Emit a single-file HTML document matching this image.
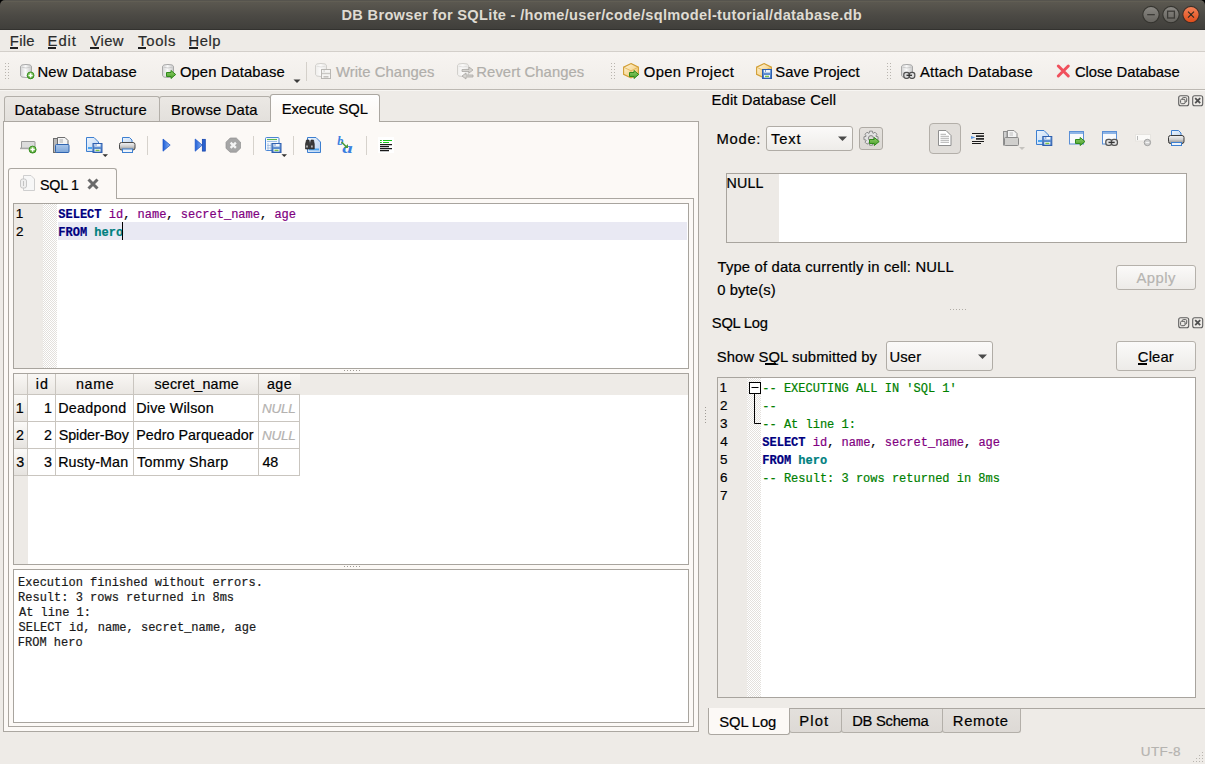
<!DOCTYPE html>
<html><head><meta charset="utf-8"><style>
html,body{margin:0;padding:0;}
body{width:1205px;height:764px;overflow:hidden;position:relative;background:#eeebe7;font-family:"Liberation Sans",sans-serif;}
body>div,body>svg{position:absolute;}
body>div{-webkit-text-stroke:0.2px currentColor;}
</style></head><body>
<div style="left:0px;top:0px;width:8px;height:8px;background:#000;"></div>
<div style="left:1197px;top:0px;width:8px;height:8px;background:#000;"></div>
<div style="left:0px;top:0px;width:1205px;height:30px;background:linear-gradient(#56544e 0px,#56544e 1px,#615e54 1px,#615e54 2px,#5b5850 2px,#4b4944 16px,#403f3b 29px,#33322f 29px);border-radius:5px 5px 0 0;"></div>
<div style="top:5px;font:bold 14.6px/20px 'Liberation Sans', sans-serif;color:#dfdbd2;white-space:pre;letter-spacing:0.318px;left:341.45px;-webkit-text-stroke:0;">DB Browser for SQLite - /home/user/code/sqlmodel-tutorial/database.db</div>
<svg style="left:1140px;top:4px" width="62" height="22" viewBox="0 0 62 22">
<defs><linearGradient id="gg" x1="0" y1="0" x2="0" y2="1"><stop offset="0" stop-color="#8a8883"/><stop offset="1" stop-color="#64625d"/></linearGradient>
<linearGradient id="og" x1="0" y1="0" x2="0" y2="1"><stop offset="0" stop-color="#f5845a"/><stop offset="1" stop-color="#df4b18"/></linearGradient></defs>
<circle cx="11" cy="10.6" r="8.2" fill="url(#gg)" stroke="#35342f" stroke-width="1.1"/>
<rect x="7.2" y="10" width="7.6" height="1.3" fill="#3c3b37"/>
<circle cx="31" cy="10.6" r="8.2" fill="url(#gg)" stroke="#35342f" stroke-width="1.1"/>
<rect x="27.6" y="7.2" width="6.8" height="6.8" fill="none" stroke="#3c3b37" stroke-width="1.3"/>
<circle cx="51" cy="10.6" r="8.2" fill="url(#og)" stroke="#3a302a" stroke-width="1.1"/>
<path d="M48 7.6 L54 13.6 M54 7.6 L48 13.6" stroke="#2d2a20" stroke-width="1.1"/><circle cx="51" cy="10.6" r="1" fill="#2d2a20"/>
</svg>
<div style="left:0px;top:30px;width:1205px;height:21px;background:#eeebe7;"></div>
<div style="left:0px;top:51px;width:1205px;height:1px;background:#d3cfca;"></div>
<div style="top:31px;font:normal 14.8px/20px 'Liberation Sans', sans-serif;color:#2b2b2b;white-space:pre;letter-spacing:0.307px;left:9.82px;">File</div>
<div style="top:31px;font:normal 14.8px/20px 'Liberation Sans', sans-serif;color:#2b2b2b;white-space:pre;letter-spacing:0.901px;left:47.62px;">Edit</div>
<div style="top:31px;font:normal 14.8px/20px 'Liberation Sans', sans-serif;color:#2b2b2b;white-space:pre;letter-spacing:0.385px;left:90.53px;">View</div>
<div style="top:31px;font:normal 14.8px/20px 'Liberation Sans', sans-serif;color:#2b2b2b;white-space:pre;letter-spacing:0.714px;left:138.10px;">Tools</div>
<div style="top:31px;font:normal 14.8px/20px 'Liberation Sans', sans-serif;color:#2b2b2b;white-space:pre;letter-spacing:0.587px;left:188.42px;">Help</div>
<div style="left:10px;top:47px;width:8px;height:2px;background:#202020;"></div>
<div style="left:48px;top:47px;width:8px;height:2px;background:#202020;"></div>
<div style="left:90px;top:47px;width:9px;height:2px;background:#202020;"></div>
<div style="left:138px;top:47px;width:8px;height:2px;background:#202020;"></div>
<div style="left:189px;top:47px;width:9px;height:2px;background:#202020;"></div>
<div style="left:0px;top:52px;width:1205px;height:37px;background:linear-gradient(#f7f4f1,#f0ede9);"></div>
<div style="left:0px;top:89px;width:1205px;height:1px;background:#bcb8b2;"></div>
<div style="left:0px;top:90px;width:1205px;height:1px;background:#f7f5f2;"></div>
<svg style="left:0;top:0" width="0" height="0"><defs>
<linearGradient id="cyl" x1="0" x2="1"><stop offset="0" stop-color="#d4d4d4"/><stop offset=".45" stop-color="#fafafa"/><stop offset="1" stop-color="#c8c8c8"/></linearGradient>
<linearGradient id="cyld" x1="0" x2="1"><stop offset="0" stop-color="#eeedeb"/><stop offset=".45" stop-color="#fbfaf9"/><stop offset="1" stop-color="#e9e8e6"/></linearGradient>
<linearGradient id="grn" x1="0" y1="0" x2="0" y2="1"><stop offset="0" stop-color="#8fcf6a"/><stop offset="1" stop-color="#4a9e2a"/></linearGradient>
<linearGradient id="box" x1="0" y1="0" x2="1" y2="1"><stop offset="0" stop-color="#fff6dc"/><stop offset="1" stop-color="#f0c060"/></linearGradient>
<linearGradient id="flp" x1="0" y1="0" x2="0" y2="1"><stop offset="0" stop-color="#7aa8e0"/><stop offset="1" stop-color="#3f72c0"/></linearGradient>
<linearGradient id="fold" x1="0" y1="0" x2="0" y2="1"><stop offset="0" stop-color="#a9c6ea"/><stop offset="1" stop-color="#7ea6d8"/></linearGradient>
<linearGradient id="doc" x1="0" y1="0" x2="1" y2="1"><stop offset="0" stop-color="#eef5fd"/><stop offset="1" stop-color="#bcd5f2"/></linearGradient>
<linearGradient id="bl" x1="0" x2="1"><stop offset="0" stop-color="#1e5fd8"/><stop offset="1" stop-color="#8db4f0"/></linearGradient>
<linearGradient id="prn" x1="0" y1="0" x2="0" y2="1"><stop offset="0" stop-color="#f4f4f4"/><stop offset=".5" stop-color="#cfcfcf"/><stop offset="1" stop-color="#8a8a8a"/></linearGradient>
</defs></svg>
<svg style="left:5px;top:63px" width="4" height="18" viewBox="0 0 4 18"><rect x="0" y="0" width="1" height="1" fill="#b9b5af"/><rect x="3" y="0" width="1" height="1" fill="#b9b5af"/><rect x="0" y="3" width="1" height="1" fill="#b9b5af"/><rect x="3" y="3" width="1" height="1" fill="#b9b5af"/><rect x="0" y="6" width="1" height="1" fill="#b9b5af"/><rect x="3" y="6" width="1" height="1" fill="#b9b5af"/><rect x="0" y="9" width="1" height="1" fill="#b9b5af"/><rect x="3" y="9" width="1" height="1" fill="#b9b5af"/><rect x="0" y="12" width="1" height="1" fill="#b9b5af"/><rect x="3" y="12" width="1" height="1" fill="#b9b5af"/><rect x="0" y="15" width="1" height="1" fill="#b9b5af"/><rect x="3" y="15" width="1" height="1" fill="#b9b5af"/></svg>
<svg style="left:18px;top:62px" width="18" height="18" viewBox="18 62 18 18"><path d="M20.5 66.3 Q20.5 64.5 26.0 64.5 Q31.5 64.5 31.5 66.3 V75.7 Q31.5 77.5 26.0 77.5 Q20.5 77.5 20.5 75.7 Z" fill="url(#cyl)" stroke="#a8a8a8" stroke-width="1"/><path d="M21.5 67.2 Q26.0 68.8 30.5 67.2" fill="none" stroke="#c4c4c4" stroke-width=".8"/><circle cx="30.6" cy="75.4" r="3.4" fill="url(#grn)" stroke="#2f8a1a" stroke-width=".9"/><path d="M30.6 73.3 V77.5 M28.5 75.4 H32.7" stroke="#fff" stroke-width="1.5"/></svg>
<div style="top:62px;font:normal 14.8px/20px 'Liberation Sans', sans-serif;color:#000;white-space:pre;letter-spacing:0.197px;left:37.42px;">New Database</div>
<svg style="left:160px;top:62px" width="18" height="18" viewBox="160 62 18 18"><path d="M162.5 66.3 Q162.5 64.5 168.0 64.5 Q173.5 64.5 173.5 66.3 V75.7 Q173.5 77.5 168.0 77.5 Q162.5 77.5 162.5 75.7 Z" fill="url(#cyl)" stroke="#a8a8a8" stroke-width="1"/><path d="M163.5 67.2 Q168.0 68.8 172.5 67.2" fill="none" stroke="#c4c4c4" stroke-width=".8"/><path d="M166.5 72.52 H171.0 V70.5 L175.7 74.5 L171.0 78.5 V76.48 H166.5 Z" fill="url(#grn)" stroke="#2f8a1a" stroke-width="1"/></svg>
<div style="top:62px;font:normal 14.8px/20px 'Liberation Sans', sans-serif;color:#000;white-space:pre;letter-spacing:0.088px;left:179.93px;">Open Database</div>
<svg style="left:293px;top:79px" width="8" height="5" viewBox="0 0 8 5"><path d="M0.5 0.5 H7.5 L4 4 Z" fill="#3a3a3a"/></svg>
<div style="left:306px;top:62px;width:1px;height:19px;background:#d4d0ca;"></div>
<svg style="left:313px;top:62px" width="20" height="18" viewBox="313 62 20 18"><path d="M315.5 65.3 Q315.5 63.5 321.0 63.5 Q326.5 63.5 326.5 65.3 V74.7 Q326.5 76.5 321.0 76.5 Q315.5 76.5 315.5 74.7 Z" fill="url(#cyld)" stroke="#d2d0cc" stroke-width="1"/><path d="M316.5 66.2 Q321.0 67.8 325.5 66.2" fill="none" stroke="#dddcda" stroke-width=".8"/><rect x="321.5" y="69.5" width="9" height="9" fill="#f6f5f3" stroke="#b9b7b3" stroke-width="1"/><rect x="322" y="72.8" width="8" height="1.4" fill="#c9c7c3"/><rect x="323.5" y="76" width="5" height="1.6" fill="#c4c2be"/><rect x="323.6" y="70.5" width="1" height="1" fill="#aaa"/></svg>
<div style="top:62px;font:normal 14.8px/20px 'Liberation Sans', sans-serif;color:#b0aeaa;white-space:pre;letter-spacing:0.082px;left:335.93px;">Write Changes</div>
<svg style="left:455px;top:62px" width="20" height="18" viewBox="455 62 20 18"><path d="M457.5 65.3 Q457.5 63.5 463.0 63.5 Q468.5 63.5 468.5 65.3 V74.7 Q468.5 76.5 463.0 76.5 Q457.5 76.5 457.5 74.7 Z" fill="url(#cyld)" stroke="#d2d0cc" stroke-width="1"/><path d="M458.5 66.2 Q463.0 67.8 467.5 66.2" fill="none" stroke="#dddcda" stroke-width=".8"/><path d="M462 69.5 H469 V67 L473 70 L469 73 V71.5 H462 Z M473 75 H466 V73 L462 76 L466 79 V77 H473 Z" fill="#d6d4d0" stroke="#a9a7a3" stroke-width=".8"/></svg>
<div style="top:62px;font:normal 14.8px/20px 'Liberation Sans', sans-serif;color:#b0aeaa;white-space:pre;letter-spacing:0.075px;left:476.32px;">Revert Changes</div>
<svg style="left:611px;top:63px" width="4" height="18" viewBox="0 0 4 18"><rect x="0" y="0" width="1" height="1" fill="#b9b5af"/><rect x="3" y="0" width="1" height="1" fill="#b9b5af"/><rect x="0" y="3" width="1" height="1" fill="#b9b5af"/><rect x="3" y="3" width="1" height="1" fill="#b9b5af"/><rect x="0" y="6" width="1" height="1" fill="#b9b5af"/><rect x="3" y="6" width="1" height="1" fill="#b9b5af"/><rect x="0" y="9" width="1" height="1" fill="#b9b5af"/><rect x="3" y="9" width="1" height="1" fill="#b9b5af"/><rect x="0" y="12" width="1" height="1" fill="#b9b5af"/><rect x="3" y="12" width="1" height="1" fill="#b9b5af"/><rect x="0" y="15" width="1" height="1" fill="#b9b5af"/><rect x="3" y="15" width="1" height="1" fill="#b9b5af"/></svg>
<svg style="left:621px;top:62px" width="20" height="18" viewBox="621 62 20 18"><path d="M631.0 63.6 L638.4 67.185 V74.315 L631.0 77.9 L623.6 74.315 V67.185 Z" fill="url(#box)" stroke="#d19d32" stroke-width="1.1"/><path d="M623.6 67.185 L631.0 70.87 L638.4 67.185 M631.0 70.87 V77.9" fill="none" stroke="#deb050" stroke-width=".8"/><path d="M629.5 72.52 H634.0 V70.5 L638.7 74.5 L634.0 78.5 V76.48 H629.5 Z" fill="url(#grn)" stroke="#2f8a1a" stroke-width="1"/></svg>
<div style="top:62px;font:normal 14.8px/20px 'Liberation Sans', sans-serif;color:#000;white-space:pre;letter-spacing:0.326px;left:643.83px;">Open Project</div>
<svg style="left:754px;top:62px" width="20" height="18" viewBox="754 62 20 18"><path d="M764.0 63.6 L771.4 67.185 V74.315 L764.0 77.9 L756.6 74.315 V67.185 Z" fill="url(#box)" stroke="#d19d32" stroke-width="1.1"/><path d="M756.6 67.185 L764.0 70.87 L771.4 67.185 M764.0 70.87 V77.9" fill="none" stroke="#deb050" stroke-width=".8"/><rect x="762.5" y="69.5" width="9" height="9" fill="url(#flp)" stroke="#2e5fae" stroke-width="1"/><rect x="764" y="70" width="6" height="2.6" fill="#f2f6fb"/><rect x="764" y="75" width="6" height="2.6" fill="#f2f6fb"/><rect x="765" y="75.7" width="4" height="1.4" fill="#7cc34a"/><rect x="765" y="70.4" width="1" height="1.2" fill="#2e5fae"/></svg>
<div style="top:62px;font:normal 14.8px/20px 'Liberation Sans', sans-serif;color:#000;white-space:pre;letter-spacing:0.036px;left:775.33px;">Save Project</div>
<svg style="left:887px;top:63px" width="4" height="18" viewBox="0 0 4 18"><rect x="0" y="0" width="1" height="1" fill="#b9b5af"/><rect x="3" y="0" width="1" height="1" fill="#b9b5af"/><rect x="0" y="3" width="1" height="1" fill="#b9b5af"/><rect x="3" y="3" width="1" height="1" fill="#b9b5af"/><rect x="0" y="6" width="1" height="1" fill="#b9b5af"/><rect x="3" y="6" width="1" height="1" fill="#b9b5af"/><rect x="0" y="9" width="1" height="1" fill="#b9b5af"/><rect x="3" y="9" width="1" height="1" fill="#b9b5af"/><rect x="0" y="12" width="1" height="1" fill="#b9b5af"/><rect x="3" y="12" width="1" height="1" fill="#b9b5af"/><rect x="0" y="15" width="1" height="1" fill="#b9b5af"/><rect x="3" y="15" width="1" height="1" fill="#b9b5af"/></svg>
<svg style="left:899px;top:62px" width="18" height="18" viewBox="899 62 18 18"><path d="M901.5 66.3 Q901.5 64.5 907.0 64.5 Q912.5 64.5 912.5 66.3 V75.7 Q912.5 77.5 907.0 77.5 Q901.5 77.5 901.5 75.7 Z" fill="url(#cyl)" stroke="#a8a8a8" stroke-width="1"/><path d="M902.5 67.2 Q907.0 68.8 911.5 67.2" fill="none" stroke="#c4c4c4" stroke-width=".8"/><rect x="903.8" y="72.3" width="5.5" height="6" rx="2.2" fill="#ddd" stroke="#505050" stroke-width="1.2"/><rect x="909.3" y="72.3" width="5.5" height="6" rx="2.2" fill="#ddd" stroke="#505050" stroke-width="1.2"/><path d="M906.5 75.3 H912" stroke="#303030" stroke-width="1.3"/></svg>
<div style="top:62px;font:normal 14.8px/20px 'Liberation Sans', sans-serif;color:#000;white-space:pre;letter-spacing:0.230px;left:920.00px;">Attach Database</div>
<svg style="left:1055px;top:62px" width="17" height="18" viewBox="1055 62 17 18"><path d="M1058.3 66 L1068.3 76 M1068.3 66 L1058.3 76" stroke="#f0505c" stroke-width="3" stroke-linecap="round"/></svg>
<div style="top:62px;font:normal 14.8px/20px 'Liberation Sans', sans-serif;color:#000;white-space:pre;letter-spacing:-0.046px;left:1074.96px;">Close Database</div>
<div style="left:4px;top:96px;width:156px;height:25px;background:linear-gradient(#ebe8e4,#e3e0dc);border:1px solid #b3afa9;border-bottom:none;border-radius:3px 3px 0 0;box-sizing:border-box;"></div>
<div style="top:100px;font:normal 14.8px/20px 'Liberation Sans', sans-serif;color:#000;white-space:pre;letter-spacing:0.279px;left:14.42px;">Database Structure</div>
<div style="left:159px;top:96px;width:112px;height:25px;background:linear-gradient(#ebe8e4,#e3e0dc);border:1px solid #b3afa9;border-bottom:none;border-radius:3px 3px 0 0;box-sizing:border-box;"></div>
<div style="top:100px;font:normal 14.8px/20px 'Liberation Sans', sans-serif;color:#000;white-space:pre;letter-spacing:0.175px;left:171.02px;">Browse Data</div>
<div style="left:3px;top:121px;width:696px;height:611px;background:#fcf9f6;border:1px solid #aba7a1;box-sizing:border-box;"></div>
<div style="left:270px;top:94px;width:110px;height:28px;background:linear-gradient(#fefefe,#fcf9f6 60%);border:1px solid #aba7a1;border-bottom:none;border-radius:3px 3px 0 0;box-sizing:border-box;"></div>
<div style="top:99px;font:normal 14.8px/20px 'Liberation Sans', sans-serif;color:#000;white-space:pre;letter-spacing:-0.114px;left:281.82px;">Execute SQL</div>
<svg style="left:18px;top:136px" width="20" height="20" viewBox="18 136 20 20"><path d="M21.5 141.5 H34.5 Q35 141.5 35 142 V148.5 H21.5 Z" fill="#dcdcdc" stroke="#9a9a9a" stroke-width="1"/><rect x="20" y="147.6" width="15" height="1.6" fill="#a8a8a8"/><circle cx="32.6" cy="149.6" r="3.5" fill="url(#grn)" stroke="#2f8a1a" stroke-width=".9"/><path d="M32.6 147.4 V151.8 M30.4 149.6 H34.8" stroke="#fff" stroke-width="1.5"/></svg>
<svg style="left:51px;top:135px" width="20" height="20" viewBox="51 135 20 20"><rect x="53.5" y="138.5" width="4" height="14" fill="#b9b9b9" stroke="#6e6e6e" stroke-width="1"/><path d="M57.5 137.5 H65 L68 140.5 V146 H57.5 Z" fill="#f4f4f4" stroke="#6e6e6e" stroke-width="1"/><path d="M59.5 140 H63 M59.5 142 H63" stroke="#9a9a9a" stroke-width=".8"/><rect x="55.5" y="144.5" width="13.5" height="8" rx="1" fill="url(#fold)" stroke="#2f64b0" stroke-width="1"/></svg>
<svg style="left:84px;top:135px" width="26" height="23" viewBox="84 135 26 23"><path d="M86.5 137.5 H94 L98.5 142 V151.5 H86.5 Z" fill="url(#doc)" stroke="#3d7fd0" stroke-width="1"/><rect x="88" y="147" width="4" height="2" fill="#4aa4f0"/><rect x="93.0" y="143.5" width="9.0" height="9" fill="url(#flp)" stroke="#2e5fae" stroke-width="1"/><rect x="94.5" y="144" width="6.0" height="2.6" fill="#f2f6fb"/><rect x="94.5" y="149" width="6.0" height="2.6" fill="#f2f6fb"/><rect x="95.5" y="149.7" width="4.0" height="1.4" fill="#7cc34a"/><rect x="95.5" y="144.4" width="1" height="1.2" fill="#2e5fae"/><path d="M102.5 154.3 H108 L105.25 157 Z" fill="#333"/></svg>
<svg style="left:117px;top:135px" width="20" height="20" viewBox="117 135 20 20"><path d="M122.5 137.5 H129.5 L132 140 V145 H122.5 Z" fill="url(#doc)" stroke="#3d7fd0" stroke-width="1"/><rect x="119.5" y="142.5" width="15.5" height="7.5" rx="2" fill="url(#prn)" stroke="#4a4a4a" stroke-width="1"/><rect x="122.5" y="149" width="10" height="3.5" fill="#eef4fb" stroke="#3d7fd0" stroke-width="1"/></svg>
<div style="left:147px;top:136px;width:1px;height:19px;background:#d6d2cc;"></div>
<svg style="left:160px;top:136px" width="14" height="18" viewBox="160 136 14 18"><path d="M163 139 L170.2 145.1 L163 151.2 Z" fill="url(#bl)" stroke="#1a55c8" stroke-width=".7"/></svg>
<svg style="left:193px;top:136px" width="15" height="18" viewBox="193 136 15 18"><path d="M195.2 139 L202.2 145.1 L195.2 151.2 Z" fill="url(#bl)" stroke="#1a55c8" stroke-width=".7"/><rect x="202.3" y="139.3" width="3" height="11.8" fill="#2a62d0" stroke="#0f3fa8" stroke-width=".7"/></svg>
<svg style="left:224px;top:136px" width="18" height="18" viewBox="224 136 18 18"><path d="M230.2 138 H236.3 L240.5 142.2 V148.3 L236.3 152.2 H230.2 L226 148.3 V142.2 Z" fill="#a6a6a6" stroke="#909090" stroke-width=".7"/><path d="M230.6 142.6 L235.9 147.9 M235.9 142.6 L230.6 147.9" stroke="#f4f4f4" stroke-width="2.3"/></svg>
<div style="left:253px;top:136px;width:1px;height:19px;background:#d6d2cc;"></div>
<svg style="left:263px;top:135px" width="27" height="23" viewBox="263 135 27 23"><rect x="265.5" y="137.5" width="13.5" height="13" rx="1" fill="#f4f8fd" stroke="#4a86d4" stroke-width="1"/><path d="M267 139.5 H277" stroke="#5cb84a" stroke-width="1.1"/><path d="M267 141.5 H277" stroke="#8ab0e0" stroke-width=".8"/><path d="M268 143 V150 M271 143 V150 M267 145.5 H271 M267 148 H271" stroke="#9bb8df" stroke-width=".8"/><rect x="272.0" y="143.5" width="9.0" height="9" fill="url(#flp)" stroke="#2e5fae" stroke-width="1"/><rect x="273.5" y="144" width="6.0" height="2.6" fill="#f2f6fb"/><rect x="273.5" y="149" width="6.0" height="2.6" fill="#f2f6fb"/><rect x="274.5" y="149.7" width="4.0" height="1.4" fill="#7cc34a"/><rect x="274.5" y="144.4" width="1" height="1.2" fill="#2e5fae"/><path d="M281.5 154.3 H287 L284.25 157 Z" fill="#333"/></svg>
<div style="left:293px;top:136px;width:1px;height:19px;background:#d6d2cc;"></div>
<svg style="left:303px;top:135px" width="20" height="20" viewBox="303 135 20 20"><path d="M307.5 137.5 H316 L320.5 142 V152.5 H307.5 Z" fill="url(#doc)" stroke="#3d7fd0" stroke-width="1"/><rect x="309" y="148.5" width="10" height="1.8" fill="#4aa4f0"/><path d="M305.5 144 L306.5 140 H309 L309.8 144 V149 H305.5 Z M310.2 144 L311 140 H313.5 L314.3 144 V149 H310.2 Z" fill="#3a3a3a" stroke="#1e1e1e" stroke-width=".6"/><rect x="306.3" y="145.5" width="1.4" height="2" fill="#d0d0d0"/><rect x="311.2" y="145.5" width="1.4" height="2" fill="#d0d0d0"/></svg>
<svg style="left:336px;top:135px" width="20" height="20" viewBox="336 135 20 20"><text x="337.2" y="144.8" font-family="Liberation Serif" font-style="italic" font-weight="bold" font-size="12.5" fill="#3a80e0">b</text><text x="342.2" y="153" font-family="Liberation Serif" font-style="italic" font-weight="bold" font-size="15.5" fill="#3a80e0" transform="translate(342.2 153) scale(1.35 1) translate(-342.2 -153)">a</text><path d="M341.5 142 L346.5 147" stroke="#4a9a3a" stroke-width="1.6"/><path d="M344 148 H348 V144 Z" fill="#4a9a3a"/></svg>
<div style="left:366px;top:136px;width:1px;height:19px;background:#d6d2cc;"></div>
<svg style="left:377px;top:136px" width="19" height="18" viewBox="377 136 19 18"><rect x="378" y="137" width="16" height="16" fill="#fff"/><path d="M380 140.5 H381.8 M383 140.5 H392 M380 142.5 H381.8 M383 142.5 H389" stroke="#19c419" stroke-width="1.1"/><path d="M380 144.6 H392 M380 146.6 H389 M380 148.6 H392 M380 150.6 H389" stroke="#1a1a1a" stroke-width="1.1"/></svg>
<div style="left:8px;top:198px;width:686px;height:529px;border:1px solid #aba7a1;box-sizing:border-box;"></div>
<div style="left:8px;top:168px;width:109px;height:31px;background:#fcf9f6;border:1px solid #aba7a1;border-bottom:none;border-radius:3px 3px 0 0;box-sizing:border-box;"></div>
<svg style="left:19px;top:174px" width="18" height="18" viewBox="0 0 18 18"><path d="M4.5 1.5 H12 L15.5 5 V16.5 H4.5 Z" fill="#f7f7f7" stroke="#c9c9c9" stroke-width=".9"/>
<rect x="1.5" y="5" width="6" height="9" rx="2" fill="#efefef" stroke="#c2c2c2" stroke-width=".9"/><path d="M4.5 7 V12" stroke="#c2c2c2"/></svg>
<div style="top:175px;font:normal 14.27px/20px 'Liberation Sans', sans-serif;color:#000;white-space:pre;letter-spacing:-0.250px;left:40.06px;">SQL 1</div>
<svg style="left:86px;top:177px" width="14" height="14" viewBox="0 0 14 14"><path d="M2.5 2.5 L11.5 11.5 M11.5 2.5 L2.5 11.5" stroke="#6b6b6b" stroke-width="3"/></svg>
<div style="left:13px;top:203px;width:676px;height:166px;background:#fff;border:1px solid #a8a49e;box-sizing:border-box;"></div>
<div style="left:14px;top:204px;width:29px;height:164px;background:#edeae6;"></div>
<div style="left:43px;top:204px;width:14px;height:164px;background-image:repeating-conic-gradient(#e3e0dc 0 25%,#ffffff 0 50%);background-size:2px 2px;"></div>
<div style="left:58px;top:222px;width:629px;height:18px;background:#e9e9f3;"></div>
<div style="top:206px;font:normal 12px/18px 'Liberation Mono', monospace;color:#000;white-space:pre;left:58.30px;"><span style="color:#00007f;font-weight:bold">SELECT</span><span style="color:#000;font-weight:normal"> </span><span style="color:#7f007f;font-weight:normal">id</span><span style="color:#000;font-weight:normal">, </span><span style="color:#7f007f;font-weight:normal">name</span><span style="color:#000;font-weight:normal">, </span><span style="color:#7f007f;font-weight:normal">secret_name</span><span style="color:#000;font-weight:normal">, </span><span style="color:#7f007f;font-weight:normal">age</span></div>
<div style="top:224px;font:normal 12px/18px 'Liberation Mono', monospace;color:#000;white-space:pre;left:58.30px;"><span style="color:#00007f;font-weight:bold">FROM</span><span style="color:#000;font-weight:normal"> </span><span style="color:#007f7f;font-weight:bold">hero</span></div>
<div style="left:122px;top:222px;width:1px;height:18px;background:#000;"></div>
<div style="top:204px;font:normal 13.5px/20px 'Liberation Sans', sans-serif;color:#000;white-space:pre;left:15.79px;">1</div>
<div style="top:222px;font:normal 13.5px/20px 'Liberation Sans', sans-serif;color:#000;white-space:pre;left:16.12px;">2</div>
<div style="left:344px;top:370px;width:1px;height:1px;background:#9f9b95;"></div>
<div style="left:344px;top:566px;width:1px;height:1px;background:#9f9b95;"></div>
<div style="left:347px;top:370px;width:1px;height:1px;background:#9f9b95;"></div>
<div style="left:347px;top:566px;width:1px;height:1px;background:#9f9b95;"></div>
<div style="left:350px;top:370px;width:1px;height:1px;background:#9f9b95;"></div>
<div style="left:350px;top:566px;width:1px;height:1px;background:#9f9b95;"></div>
<div style="left:353px;top:370px;width:1px;height:1px;background:#9f9b95;"></div>
<div style="left:353px;top:566px;width:1px;height:1px;background:#9f9b95;"></div>
<div style="left:356px;top:370px;width:1px;height:1px;background:#9f9b95;"></div>
<div style="left:356px;top:566px;width:1px;height:1px;background:#9f9b95;"></div>
<div style="left:359px;top:370px;width:1px;height:1px;background:#9f9b95;"></div>
<div style="left:359px;top:566px;width:1px;height:1px;background:#9f9b95;"></div>
<div style="left:13px;top:373px;width:676px;height:192px;background:#fff;border:1px solid #a8a49e;box-sizing:border-box;"></div>
<div style="left:14px;top:374px;width:674px;height:21px;background:#eeebe7;"></div>
<div style="left:14px;top:394px;width:14px;height:170px;background:#edeae6;"></div>
<div style="left:14px;top:374px;width:14px;height:20px;background:linear-gradient(#f9f7f4,#eae7e3);border-right:1px solid #c9c5bf;box-sizing:border-box;"></div>
<div style="left:28px;top:374px;width:28px;height:20px;background:linear-gradient(#f9f7f4,#eae7e3);border-right:1px solid #c9c5bf;box-sizing:border-box;"></div>
<div style="left:56px;top:374px;width:78px;height:20px;background:linear-gradient(#f9f7f4,#eae7e3);border-right:1px solid #c9c5bf;box-sizing:border-box;"></div>
<div style="left:134px;top:374px;width:125px;height:20px;background:linear-gradient(#f9f7f4,#eae7e3);border-right:1px solid #c9c5bf;box-sizing:border-box;"></div>
<div style="left:259px;top:374px;width:41px;height:20px;background:linear-gradient(#f9f7f4,#eae7e3);"></div>
<div style="left:14px;top:394px;width:286px;height:1px;background:#c9c5bf;"></div>
<div style="left:14px;top:395px;width:13px;height:26px;background:linear-gradient(#fbfaf8,#e6e3df);"></div>
<div style="left:28px;top:395px;width:271px;height:26px;background:#fff;"></div>
<div style="left:14px;top:421px;width:286px;height:1px;background:#c9c5bf;"></div>
<div style="left:14px;top:422px;width:13px;height:26px;background:linear-gradient(#fbfaf8,#e6e3df);"></div>
<div style="left:28px;top:422px;width:271px;height:26px;background:#fff;"></div>
<div style="left:14px;top:448px;width:286px;height:1px;background:#c9c5bf;"></div>
<div style="left:14px;top:449px;width:13px;height:26px;background:linear-gradient(#fbfaf8,#e6e3df);"></div>
<div style="left:28px;top:449px;width:271px;height:26px;background:#fff;"></div>
<div style="left:14px;top:475px;width:286px;height:1px;background:#c9c5bf;"></div>
<div style="left:27px;top:394px;width:1px;height:82px;background:#c9c5bf;"></div>
<div style="left:55px;top:394px;width:1px;height:82px;background:#c9c5bf;"></div>
<div style="left:133px;top:394px;width:1px;height:82px;background:#c9c5bf;"></div>
<div style="left:258px;top:394px;width:1px;height:82px;background:#c9c5bf;"></div>
<div style="left:299px;top:394px;width:1px;height:82px;background:#c9c5bf;"></div>
<div style="top:374px;font:normal 14.3px/20px 'Liberation Sans', sans-serif;color:#000;white-space:pre;letter-spacing:0.977px;left:35.87px;">id</div>
<div style="top:374px;font:normal 14.3px/20px 'Liberation Sans', sans-serif;color:#000;white-space:pre;letter-spacing:0.608px;left:76.07px;">name</div>
<div style="top:374px;font:normal 14.3px/20px 'Liberation Sans', sans-serif;color:#000;white-space:pre;letter-spacing:0.142px;left:154.57px;">secret_name</div>
<div style="top:374px;font:normal 14.3px/20px 'Liberation Sans', sans-serif;color:#000;white-space:pre;letter-spacing:0.453px;left:266.93px;">age</div>
<div style="top:398px;font:normal 14.3px/20px 'Liberation Sans', sans-serif;color:#000;white-space:pre;left:15.73px;">1</div>
<div style="top:398px;font:normal 14.3px/20px 'Liberation Sans', sans-serif;color:#000;white-space:pre;right:1153px;">1</div>
<div style="top:398px;font:normal 14.3px/20px 'Liberation Sans', sans-serif;color:#000;white-space:pre;letter-spacing:0.311px;left:58.16px;">Deadpond</div>
<div style="top:398px;font:normal 14.3px/20px 'Liberation Sans', sans-serif;color:#000;white-space:pre;letter-spacing:0.187px;left:136.26px;">Dive Wilson</div>
<div style="top:399px;font:italic normal 13.5px/20px 'Liberation Sans', sans-serif;color:#b4b2b0;white-space:pre;letter-spacing:-0.250px;left:262.00px;">NULL</div>
<div style="top:425px;font:normal 14.3px/20px 'Liberation Sans', sans-serif;color:#000;white-space:pre;left:16.09px;">2</div>
<div style="top:425px;font:normal 14.3px/20px 'Liberation Sans', sans-serif;color:#000;white-space:pre;right:1153px;">2</div>
<div style="top:425px;font:normal 14.3px/20px 'Liberation Sans', sans-serif;color:#000;white-space:pre;letter-spacing:-0.052px;left:58.66px;">Spider-Boy</div>
<div style="top:425px;font:normal 14.3px/20px 'Liberation Sans', sans-serif;color:#000;white-space:pre;letter-spacing:0.029px;left:136.26px;">Pedro Parqueador</div>
<div style="top:426px;font:italic normal 13.5px/20px 'Liberation Sans', sans-serif;color:#b4b2b0;white-space:pre;letter-spacing:-0.250px;left:262.00px;">NULL</div>
<div style="top:452px;font:normal 14.3px/20px 'Liberation Sans', sans-serif;color:#000;white-space:pre;left:16.23px;">3</div>
<div style="top:452px;font:normal 14.3px/20px 'Liberation Sans', sans-serif;color:#000;white-space:pre;right:1153px;">3</div>
<div style="top:452px;font:normal 14.3px/20px 'Liberation Sans', sans-serif;color:#000;white-space:pre;letter-spacing:0.104px;left:58.16px;">Rusty-Man</div>
<div style="top:452px;font:normal 14.3px/20px 'Liberation Sans', sans-serif;color:#000;white-space:pre;letter-spacing:0.293px;left:137.11px;">Tommy Sharp</div>
<div style="top:452px;font:normal 14.3px/20px 'Liberation Sans', sans-serif;color:#000;white-space:pre;letter-spacing:-0.015px;left:262.41px;">48</div>
<div style="left:13px;top:569px;width:676px;height:154px;background:#fff;border:1px solid #a8a49e;box-sizing:border-box;"></div>
<div style="top:574px;font:normal 12px/18px 'Liberation Mono', monospace;color:#1a1a1a;white-space:pre;left:18.04px;">Execution finished without errors.</div>
<div style="top:589px;font:normal 12px/18px 'Liberation Mono', monospace;color:#1a1a1a;white-space:pre;left:18.04px;">Result: 3 rows returned in 8ms</div>
<div style="top:604px;font:normal 12px/18px 'Liberation Mono', monospace;color:#1a1a1a;white-space:pre;left:19.00px;">At line 1:</div>
<div style="top:619px;font:normal 12px/18px 'Liberation Mono', monospace;color:#1a1a1a;white-space:pre;left:18.52px;">SELECT id, name, secret_name, age</div>
<div style="top:634px;font:normal 12px/18px 'Liberation Mono', monospace;color:#1a1a1a;white-space:pre;left:17.86px;">FROM hero</div>
<div style="left:705px;top:407px;width:1px;height:1px;background:#9f9b95;"></div>
<div style="left:705px;top:410px;width:1px;height:1px;background:#9f9b95;"></div>
<div style="left:705px;top:413px;width:1px;height:1px;background:#9f9b95;"></div>
<div style="left:705px;top:416px;width:1px;height:1px;background:#9f9b95;"></div>
<div style="left:705px;top:419px;width:1px;height:1px;background:#9f9b95;"></div>
<div style="left:705px;top:422px;width:1px;height:1px;background:#9f9b95;"></div>
<div style="top:90px;font:normal 14.8px/20px 'Liberation Sans', sans-serif;color:#000;white-space:pre;letter-spacing:0.106px;left:711.62px;">Edit Database Cell</div>
<svg style="left:1178px;top:95px" width="26" height="12" viewBox="0 0 26 12"><rect x="0.7" y="0.7" width="10" height="10" rx="2" fill="none" stroke="#5e5e5e" stroke-width="1.1"/>
<rect x="4.3" y="2.6" width="4.4" height="4.4" rx="1" fill="none" stroke="#5e5e5e" stroke-width="1"/><rect x="2.6" y="4.3" width="4.4" height="4.4" rx="1" fill="#edebe7" stroke="#5e5e5e" stroke-width="1"/>
<rect x="14.7" y="0.7" width="10" height="10" rx="2" fill="none" stroke="#5e5e5e" stroke-width="1.1"/>
<path d="M17.2 3.2 L22.2 8.2 M22.2 3.2 L17.2 8.2" stroke="#505050" stroke-width="1.8"/></svg>
<div style="top:129px;font:normal 14.8px/20px 'Liberation Sans', sans-serif;color:#000;white-space:pre;letter-spacing:0.662px;left:716.62px;">Mode:</div>
<div style="left:766px;top:126px;width:87px;height:25px;background:linear-gradient(#fbfaf9,#eeece9);border:1px solid #b0aca6;border-radius:3px;box-sizing:border-box;"></div>
<svg style="left:838px;top:136.0px" width="10" height="6" viewBox="0 0 10 6"><path d="M0 0.5 H9 L4.5 5 Z" fill="#4a4a4a"/></svg>
<div style="top:129px;font:normal 14.8px/20px 'Liberation Sans', sans-serif;color:#000;white-space:pre;letter-spacing:0.862px;left:770.90px;">Text</div>
<div style="left:859px;top:127px;width:24px;height:23px;background:linear-gradient(#e4e1dd,#dbd8d4);border:1px solid #aeaaa4;border-radius:3px;box-sizing:border-box;"></div>
<svg style="left:860px;top:128px" width="22" height="21" viewBox="860 128 22 21"><path d="M869.13 133.24 L869.57 131.14 L872.43 131.14 L872.87 133.24 L873.19 133.37 L874.98 132.20 L877.00 134.22 L875.83 136.01 L875.96 136.33 L878.06 136.77 L878.06 139.63 L875.96 140.07 L875.83 140.39 L877.00 142.18 L874.98 144.20 L873.19 143.03 L872.87 143.16 L872.43 145.26 L869.57 145.26 L869.13 143.16 L868.81 143.03 L867.02 144.20 L865.00 142.18 L866.17 140.39 L866.04 140.07 L863.94 139.63 L863.94 136.77 L866.04 136.33 L866.17 136.01 L865.00 134.22 L867.02 132.20 L868.81 133.37 Z" fill="#e2e2e2" stroke="#8a8a8a" stroke-width="1"/><circle cx="871" cy="138.2" r="2.6" fill="#dcd9d5" stroke="#7a7a7a" stroke-width=".9"/><path d="M869.5 139.52 H874.25 V137.5 L879.2 141.5 L874.25 145.5 V143.48 H869.5 Z" fill="url(#grn)" stroke="#2f8a1a" stroke-width="1"/></svg>
<div style="left:929px;top:123px;width:32px;height:31px;background:#e1deda;border:1px solid #b3afa9;border-radius:4px;box-sizing:border-box;"></div>
<svg style="left:936px;top:128px" width="18" height="20" viewBox="936 128 18 20"><path d="M938.5 130.5 H946 L951 135.5 V145.5 H938.5 Z" fill="#fff" stroke="#8f8f8f" stroke-width="1"/><path d="M940.5 134.3 H946 M940.5 136.3 H949 M940.5 138.3 H949 M940.5 140.3 H949 M940.5 142.3 H949" stroke="#a8a8a8" stroke-width=".9"/></svg>
<svg style="left:970px;top:131px" width="16" height="15" viewBox="970 131 16 15"><path d="M972 133.5 H984 M972 141.5 H984 M972 143.5 H981" stroke="#1a1a1a" stroke-width="1"/><path d="M976 136.2 H984 M976 138.8 H984" stroke="#2a2a2a" stroke-width="1.8"/><path d="M971 136 L975.5 137.5 L971 139 Z" fill="#5a9ae8"/><path d="M971.5 137.5 H974" stroke="#5a9ae8" stroke-width="1"/></svg>
<svg style="left:1002px;top:128px" width="25" height="23" viewBox="1002 128 25 23"><rect x="1003.5" y="131.5" width="3.5" height="13.5" fill="#cfcfcf" stroke="#8f8f8f" stroke-width="1"/><path d="M1007.5 130.5 H1014 L1017 133.5 V138 H1007.5 Z" fill="#f4f4f4" stroke="#8f8f8f" stroke-width="1"/><path d="M1009.5 133 H1013 M1009.5 135 H1013" stroke="#b0b0b0" stroke-width=".8"/><rect x="1004.5" y="137.5" width="14" height="8" rx="1" fill="#d0cfcd" stroke="#8a8a8a" stroke-width="1"/><path d="M1019 147 H1025 L1022 150 Z" fill="#c4c2be"/></svg>
<svg style="left:1034px;top:128px" width="20" height="19" viewBox="1034 128 20 19"><path d="M1036.5 130.5 H1044 L1048.5 135 V144.5 H1036.5 Z" fill="url(#doc)" stroke="#3d7fd0" stroke-width="1"/><rect x="1038" y="140" width="4" height="2" fill="#4aa4f0"/><rect x="1042.8" y="136.5" width="9.0" height="9" fill="url(#flp)" stroke="#2e5fae" stroke-width="1"/><rect x="1044.3" y="137" width="6.0" height="2.6" fill="#f2f6fb"/><rect x="1044.3" y="142" width="6.0" height="2.6" fill="#f2f6fb"/><rect x="1045.3" y="142.7" width="4.0" height="1.4" fill="#7cc34a"/><rect x="1045.3" y="137.4" width="1" height="1.2" fill="#2e5fae"/></svg>
<svg style="left:1067px;top:129px" width="20" height="19" viewBox="1067 129 20 19"><rect x="1069.5" y="131.5" width="14" height="12.5" fill="#f7f9fc" stroke="#5a8fd6" stroke-width="1"/><rect x="1070" y="132" width="13" height="2" fill="#8db4e6"/><path d="M1075.5 139.52 H1080.15 V137.5 L1085.0 141.5 L1080.15 145.5 V143.48 H1075.5 Z" fill="url(#grn)" stroke="#2f8a1a" stroke-width="1"/></svg>
<svg style="left:1100px;top:129px" width="20" height="19" viewBox="1100 129 20 19"><rect x="1102.5" y="131.5" width="14" height="12.5" fill="#f7f9fc" stroke="#5a8fd6" stroke-width="1"/><rect x="1103" y="132" width="13" height="2" fill="#8db4e6"/><rect x="1105.8" y="139.4" width="6" height="6" rx="2.4" fill="#e4e4e4" stroke="#555" stroke-width="1.3"/><rect x="1111.4" y="139.4" width="6" height="6" rx="2.4" fill="#e4e4e4" stroke="#555" stroke-width="1.3"/><path d="M1108.5 142.4 H1114.7" stroke="#333" stroke-width="1.4"/></svg>
<svg style="left:1133px;top:132px" width="20" height="15" viewBox="1133 132 20 15"><rect x="1135.5" y="134.5" width="15" height="6.5" fill="#fbfaf8" stroke="#e6e4e0" stroke-width="1"/><path d="M1137.5 136 V140" stroke="#b8b8b8" stroke-width="1"/><circle cx="1147.4" cy="142.5" r="3.2" fill="#cfcfcf" stroke="#9a9a9a" stroke-width=".9"/><path d="M1145.6 142.5 H1149.2" stroke="#f4f4f4" stroke-width="1.2"/></svg>
<svg style="left:1166px;top:128px" width="20" height="20" viewBox="1166 128 20 20"><path d="M1171.5 130.5 H1178.5 L1181 133 V137 H1171.5 Z" fill="url(#doc)" stroke="#3d7fd0" stroke-width="1"/><rect x="1168.5" y="135.5" width="15.5" height="8" rx="2" fill="url(#prn)" stroke="#3a3a3a" stroke-width="1"/><rect x="1171.5" y="142.5" width="10" height="3" fill="#eef4fb" stroke="#3d7fd0" stroke-width="1"/></svg>
<div style="left:726px;top:173px;width:461px;height:70px;background:#fff;border:1px solid #a8a49e;box-sizing:border-box;"></div>
<div style="left:727px;top:174px;width:52px;height:68px;background:#edeae6;"></div>
<div style="top:173px;font:normal 14.3px/20px 'Liberation Sans', sans-serif;color:#000;white-space:pre;letter-spacing:0.145px;left:726.46px;">NULL</div>
<div style="top:257px;font:normal 14.8px/20px 'Liberation Sans', sans-serif;color:#000;white-space:pre;letter-spacing:0.170px;left:717.50px;">Type of data currently in cell: NULL</div>
<div style="top:280px;font:normal 14.8px/20px 'Liberation Sans', sans-serif;color:#000;white-space:pre;letter-spacing:0.110px;left:717.21px;">0 byte(s)</div>
<div style="left:1116px;top:265px;width:80px;height:25px;background:linear-gradient(#fbfaf9,#edebe8);border:1px solid #b5b1ab;border-radius:3px;box-sizing:border-box;"></div>
<div style="top:268px;font:normal 14.8px/20px 'Liberation Sans', sans-serif;color:#b6b4b1;white-space:pre;letter-spacing:0.475px;left:1136.40px;">Apply</div>
<div style="left:950px;top:309px;width:1px;height:1px;background:#b0aca6;"></div>
<div style="left:953px;top:309px;width:1px;height:1px;background:#b0aca6;"></div>
<div style="left:956px;top:309px;width:1px;height:1px;background:#b0aca6;"></div>
<div style="left:959px;top:309px;width:1px;height:1px;background:#b0aca6;"></div>
<div style="left:962px;top:309px;width:1px;height:1px;background:#b0aca6;"></div>
<div style="left:965px;top:309px;width:1px;height:1px;background:#b0aca6;"></div>
<div style="top:313px;font:normal 14.74px/20px 'Liberation Sans', sans-serif;color:#000;white-space:pre;letter-spacing:-0.250px;left:711.84px;">SQL Log</div>
<svg style="left:1178px;top:317px" width="26" height="12" viewBox="0 0 26 12"><rect x="0.7" y="0.7" width="10" height="10" rx="2" fill="none" stroke="#5e5e5e" stroke-width="1.1"/>
<rect x="4.3" y="2.6" width="4.4" height="4.4" rx="1" fill="none" stroke="#5e5e5e" stroke-width="1"/><rect x="2.6" y="4.3" width="4.4" height="4.4" rx="1" fill="#edebe7" stroke="#5e5e5e" stroke-width="1"/>
<rect x="14.7" y="0.7" width="10" height="10" rx="2" fill="none" stroke="#5e5e5e" stroke-width="1.1"/>
<path d="M17.2 3.2 L22.2 8.2 M22.2 3.2 L17.2 8.2" stroke="#505050" stroke-width="1.8"/></svg>
<div style="top:347px;font:normal 14.8px/20px 'Liberation Sans', sans-serif;color:#000;white-space:pre;letter-spacing:0.098px;left:716.83px;">Show SQL submitted by</div>
<div style="left:765px;top:363px;width:11px;height:2px;background:#000;"></div>
<div style="left:886px;top:341px;width:107px;height:30px;background:linear-gradient(#fbfaf9,#eeece9);border:1px solid #b0aca6;border-radius:3px;box-sizing:border-box;"></div>
<svg style="left:978px;top:353.5px" width="10" height="6" viewBox="0 0 10 6"><path d="M0 0.5 H9 L4.5 5 Z" fill="#4a4a4a"/></svg>
<div style="top:347px;font:normal 14.8px/20px 'Liberation Sans', sans-serif;color:#000;white-space:pre;letter-spacing:0.201px;left:889.39px;">User</div>
<div style="left:1116px;top:341px;width:80px;height:30px;background:linear-gradient(#fbfaf9,#edebe8);border:1px solid #b5b1ab;border-radius:3px;box-sizing:border-box;"></div>
<div style="top:347px;font:normal 14.8px/20px 'Liberation Sans', sans-serif;color:#000;white-space:pre;letter-spacing:0.116px;left:1137.86px;">Clear</div>
<div style="left:1138px;top:363px;width:9px;height:2px;background:#000;"></div>
<div style="left:717px;top:377px;width:479px;height:321px;background:#fff;border:1px solid #a8a49e;box-sizing:border-box;"></div>
<div style="left:718px;top:378px;width:29px;height:319px;background:#edeae6;"></div>
<div style="left:747px;top:378px;width:14px;height:319px;background-image:repeating-conic-gradient(#e3e0dc 0 25%,#ffffff 0 50%);background-size:2px 2px;"></div>
<div style="top:378px;font:normal 13.5px/20px 'Liberation Sans', sans-serif;color:#000;white-space:pre;left:719.59px;">1</div>
<div style="top:396px;font:normal 13.5px/20px 'Liberation Sans', sans-serif;color:#000;white-space:pre;left:719.93px;">2</div>
<div style="top:414px;font:normal 13.5px/20px 'Liberation Sans', sans-serif;color:#000;white-space:pre;left:720.06px;">3</div>
<div style="top:432px;font:normal 13.5px/20px 'Liberation Sans', sans-serif;color:#000;white-space:pre;left:720.33px;">4</div>
<div style="top:450px;font:normal 13.5px/20px 'Liberation Sans', sans-serif;color:#000;white-space:pre;left:720.06px;">5</div>
<div style="top:468px;font:normal 13.5px/20px 'Liberation Sans', sans-serif;color:#000;white-space:pre;left:719.93px;">6</div>
<div style="top:486px;font:normal 13.5px/20px 'Liberation Sans', sans-serif;color:#000;white-space:pre;left:719.93px;">7</div>
<div style="top:380px;font:normal 12px/18px 'Liberation Mono', monospace;color:#000;white-space:pre;left:762.30px;"><span style="color:#007f00;font-weight:normal">-- EXECUTING ALL IN 'SQL 1'</span></div>
<div style="top:398px;font:normal 12px/18px 'Liberation Mono', monospace;color:#000;white-space:pre;left:762.30px;"><span style="color:#007f00;font-weight:normal">--</span></div>
<div style="top:416px;font:normal 12px/18px 'Liberation Mono', monospace;color:#000;white-space:pre;left:762.30px;"><span style="color:#007f00;font-weight:normal">-- At line 1:</span></div>
<div style="top:434px;font:normal 12px/18px 'Liberation Mono', monospace;color:#000;white-space:pre;left:762.30px;"><span style="color:#00007f;font-weight:bold">SELECT</span><span style="color:#000;font-weight:normal"> </span><span style="color:#7f007f;font-weight:normal">id</span><span style="color:#000;font-weight:normal">, </span><span style="color:#7f007f;font-weight:normal">name</span><span style="color:#000;font-weight:normal">, </span><span style="color:#7f007f;font-weight:normal">secret_name</span><span style="color:#000;font-weight:normal">, </span><span style="color:#7f007f;font-weight:normal">age</span></div>
<div style="top:452px;font:normal 12px/18px 'Liberation Mono', monospace;color:#000;white-space:pre;left:762.30px;"><span style="color:#00007f;font-weight:bold">FROM</span><span style="color:#000;font-weight:normal"> </span><span style="color:#007f7f;font-weight:bold">hero</span></div>
<div style="top:470px;font:normal 12px/18px 'Liberation Mono', monospace;color:#000;white-space:pre;left:762.30px;"><span style="color:#007f00;font-weight:normal">-- Result: 3 rows returned in 8ms</span></div>
<svg style="left:749px;top:382px" width="13" height="43" viewBox="0 0 13 43"><rect x="0.5" y="0.5" width="11" height="11" fill="#fff" stroke="#000" stroke-width="1"/><path d="M2.5 5.5 H9.5" stroke="#000" stroke-width="1"/><path d="M5.5 11.5 V41.5 H12" fill="none" stroke="#000" stroke-width="1"/></svg>
<div style="left:708px;top:708px;width:497px;height:1px;background:#aba7a1;"></div>
<div style="left:789px;top:709px;width:53px;height:24px;background:linear-gradient(#e3e0dc,#ddd9d5);border:1px solid #b3afa9;border-top:none;border-radius:0 0 3px 3px;box-sizing:border-box;"></div>
<div style="left:841px;top:709px;width:102px;height:24px;background:linear-gradient(#e3e0dc,#ddd9d5);border:1px solid #b3afa9;border-top:none;border-radius:0 0 3px 3px;box-sizing:border-box;"></div>
<div style="left:942px;top:709px;width:79px;height:24px;background:linear-gradient(#e3e0dc,#ddd9d5);border:1px solid #b3afa9;border-top:none;border-radius:0 0 3px 3px;box-sizing:border-box;"></div>
<div style="left:708px;top:708px;width:82px;height:27px;background:#fcf9f6;border:1px solid #aba7a1;border-top:none;border-radius:0 0 3px 3px;box-sizing:border-box;"></div>
<div style="top:712px;font:normal 14.8px/20px 'Liberation Sans', sans-serif;color:#000;white-space:pre;letter-spacing:-0.157px;left:719.33px;">SQL Log</div>
<div style="top:711px;font:normal 14.8px/20px 'Liberation Sans', sans-serif;color:#000;white-space:pre;letter-spacing:1.101px;left:799.32px;">Plot</div>
<div style="top:711px;font:normal 14.73px/20px 'Liberation Sans', sans-serif;color:#000;white-space:pre;letter-spacing:-0.250px;left:852.22px;">DB Schema</div>
<div style="top:711px;font:normal 14.8px/20px 'Liberation Sans', sans-serif;color:#000;white-space:pre;letter-spacing:0.690px;left:952.82px;">Remote</div>
<div style="top:742px;font:normal 13.5px/20px 'Liberation Sans', sans-serif;color:#b5b3b0;white-space:pre;letter-spacing:0.387px;left:1140.79px;">UTF-8</div>
<div style="left:1202px;top:752px;width:1px;height:1px;background:#b9b5af;"></div>
<div style="left:1199px;top:755px;width:1px;height:1px;background:#b9b5af;"></div>
<div style="left:1202px;top:755px;width:1px;height:1px;background:#b9b5af;"></div>
<div style="left:1196px;top:758px;width:1px;height:1px;background:#b9b5af;"></div>
<div style="left:1199px;top:758px;width:1px;height:1px;background:#b9b5af;"></div>
<div style="left:1202px;top:758px;width:1px;height:1px;background:#b9b5af;"></div>
<div style="left:1193px;top:761px;width:1px;height:1px;background:#b9b5af;"></div>
<div style="left:1196px;top:761px;width:1px;height:1px;background:#b9b5af;"></div>
<div style="left:1199px;top:761px;width:1px;height:1px;background:#b9b5af;"></div>
<div style="left:1202px;top:761px;width:1px;height:1px;background:#b9b5af;"></div>
</body></html>
